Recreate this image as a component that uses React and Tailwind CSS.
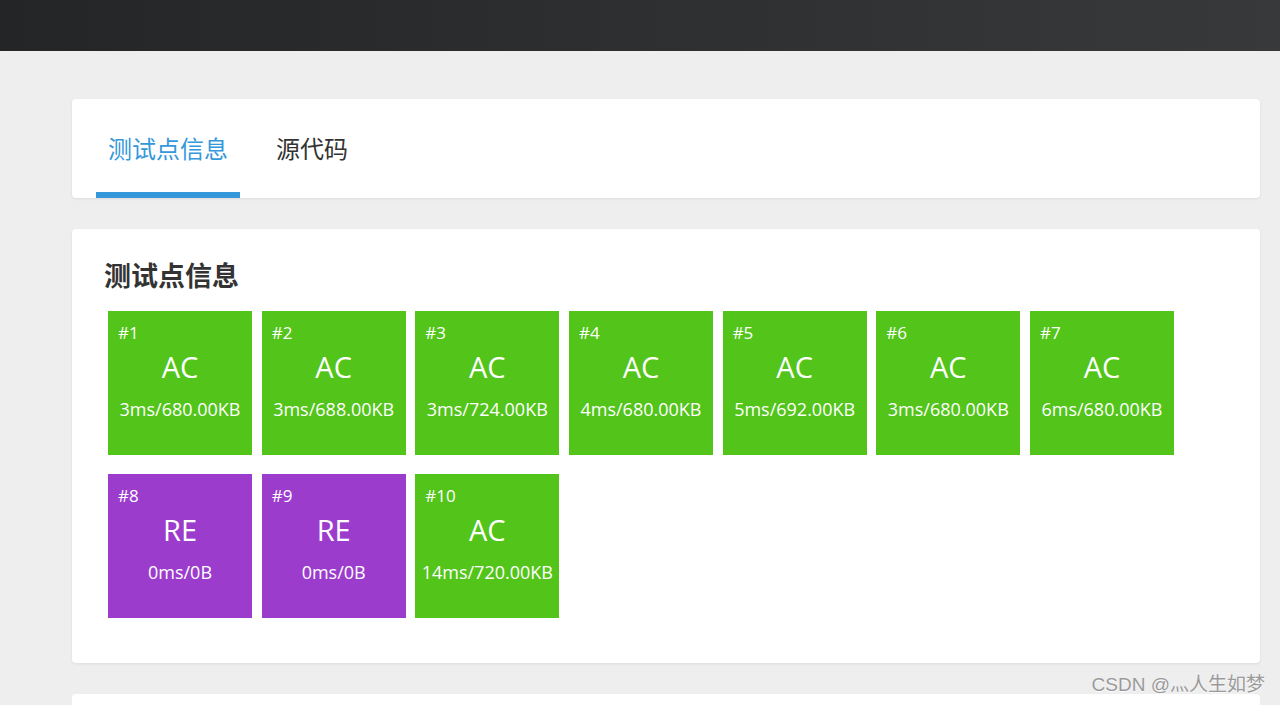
import React, { useState } from "react";

const cases = [
  { id: 1, status: "AC", info: "3ms/680.00KB" },
  { id: 2, status: "AC", info: "3ms/688.00KB" },
  { id: 3, status: "AC", info: "3ms/724.00KB" },
  { id: 4, status: "AC", info: "4ms/680.00KB" },
  { id: 5, status: "AC", info: "5ms/692.00KB" },
  { id: 6, status: "AC", info: "3ms/680.00KB" },
  { id: 7, status: "AC", info: "6ms/680.00KB" },
  { id: 8, status: "RE", info: "0ms/0B" },
  { id: 9, status: "RE", info: "0ms/0B" },
  { id: 10, status: "AC", info: "14ms/720.00KB" },
];

const TestCase = ({ item }) => (
  <div
    className={`w-[144px] h-[144px] text-white px-[10px] pt-[11px] ${
      item.status === "AC" ? "bg-[#52c41a]" : "bg-[#9b3ccd]"
    }`}
  >
    <div className="text-[17px] leading-[22px]">#{item.id}</div>
    <div className="text-center text-[29px] leading-[36px] mt-[5px]">{item.status}</div>
    <div className="text-center text-[18px] leading-[24px] mt-[12px] whitespace-nowrap -mx-[10px]">{item.info}</div>
  </div>
);

export default function App() {
  const [tab, setTab] = useState(0);

  return (
    <div className="h-[705px] bg-[#eeeeee] font-['Open_Sans','Noto_Sans_CJK_SC',sans-serif] relative overflow-hidden">
      {/* top bar */}
      <div className="h-[51px] bg-gradient-to-r from-[#242527] to-[#38393b]" />

      <div className="pl-[72px] pr-[20px] pt-[48px] flex flex-col gap-[31px]">
        {/* tabs card */}
        <div className="bg-white rounded-[4px] shadow-[0_1px_3px_rgba(0,0,0,0.08)] h-[99px] flex items-end gap-[24px] px-[24px]">
          {["测试点信息", "源代码"].map((t, i) => (
            <button
              key={t}
              onClick={() => setTab(i)}
              className={`h-[99px] flex flex-col justify-end cursor-pointer ${
                tab === i ? "text-[#3498db]" : "text-[#333333]"
              }`}
            >
              <span className="px-[12px] text-[24px] leading-[32px] mb-[27px]">{t}</span>
              <span className={`h-[6px] w-full ${tab === i ? "bg-[#3498db]" : "bg-transparent"}`} />
            </button>
          ))}
        </div>

        {/* test cases card */}
        <div className="bg-white rounded-[4px] shadow-[0_1px_3px_rgba(0,0,0,0.08)] h-[434px] pt-[30px] pl-[32px]">
          <h2 className="text-[27px] leading-[34px] font-bold text-[#333333]">测试点信息</h2>
          <div className="flex flex-wrap gap-x-[9.67px] gap-y-[19px] mt-[18px] ml-[4px] w-[1080px]">
            {cases.map((c) => (
              <TestCase key={c.id} item={c} />
            ))}
          </div>
        </div>

        <div className="bg-white rounded-[4px] h-[100px]" />
      </div>

      <div className="absolute right-[15px] bottom-[9px] text-[19px] leading-[22px] text-[#9a9a9a] font-['Liberation_Sans','Noto_Sans_CJK_SC',sans-serif] [text-shadow:0_1px_1px_rgba(255,255,255,0.9)]">
        CSDN @灬人生如梦
      </div>
    </div>
  );
}
